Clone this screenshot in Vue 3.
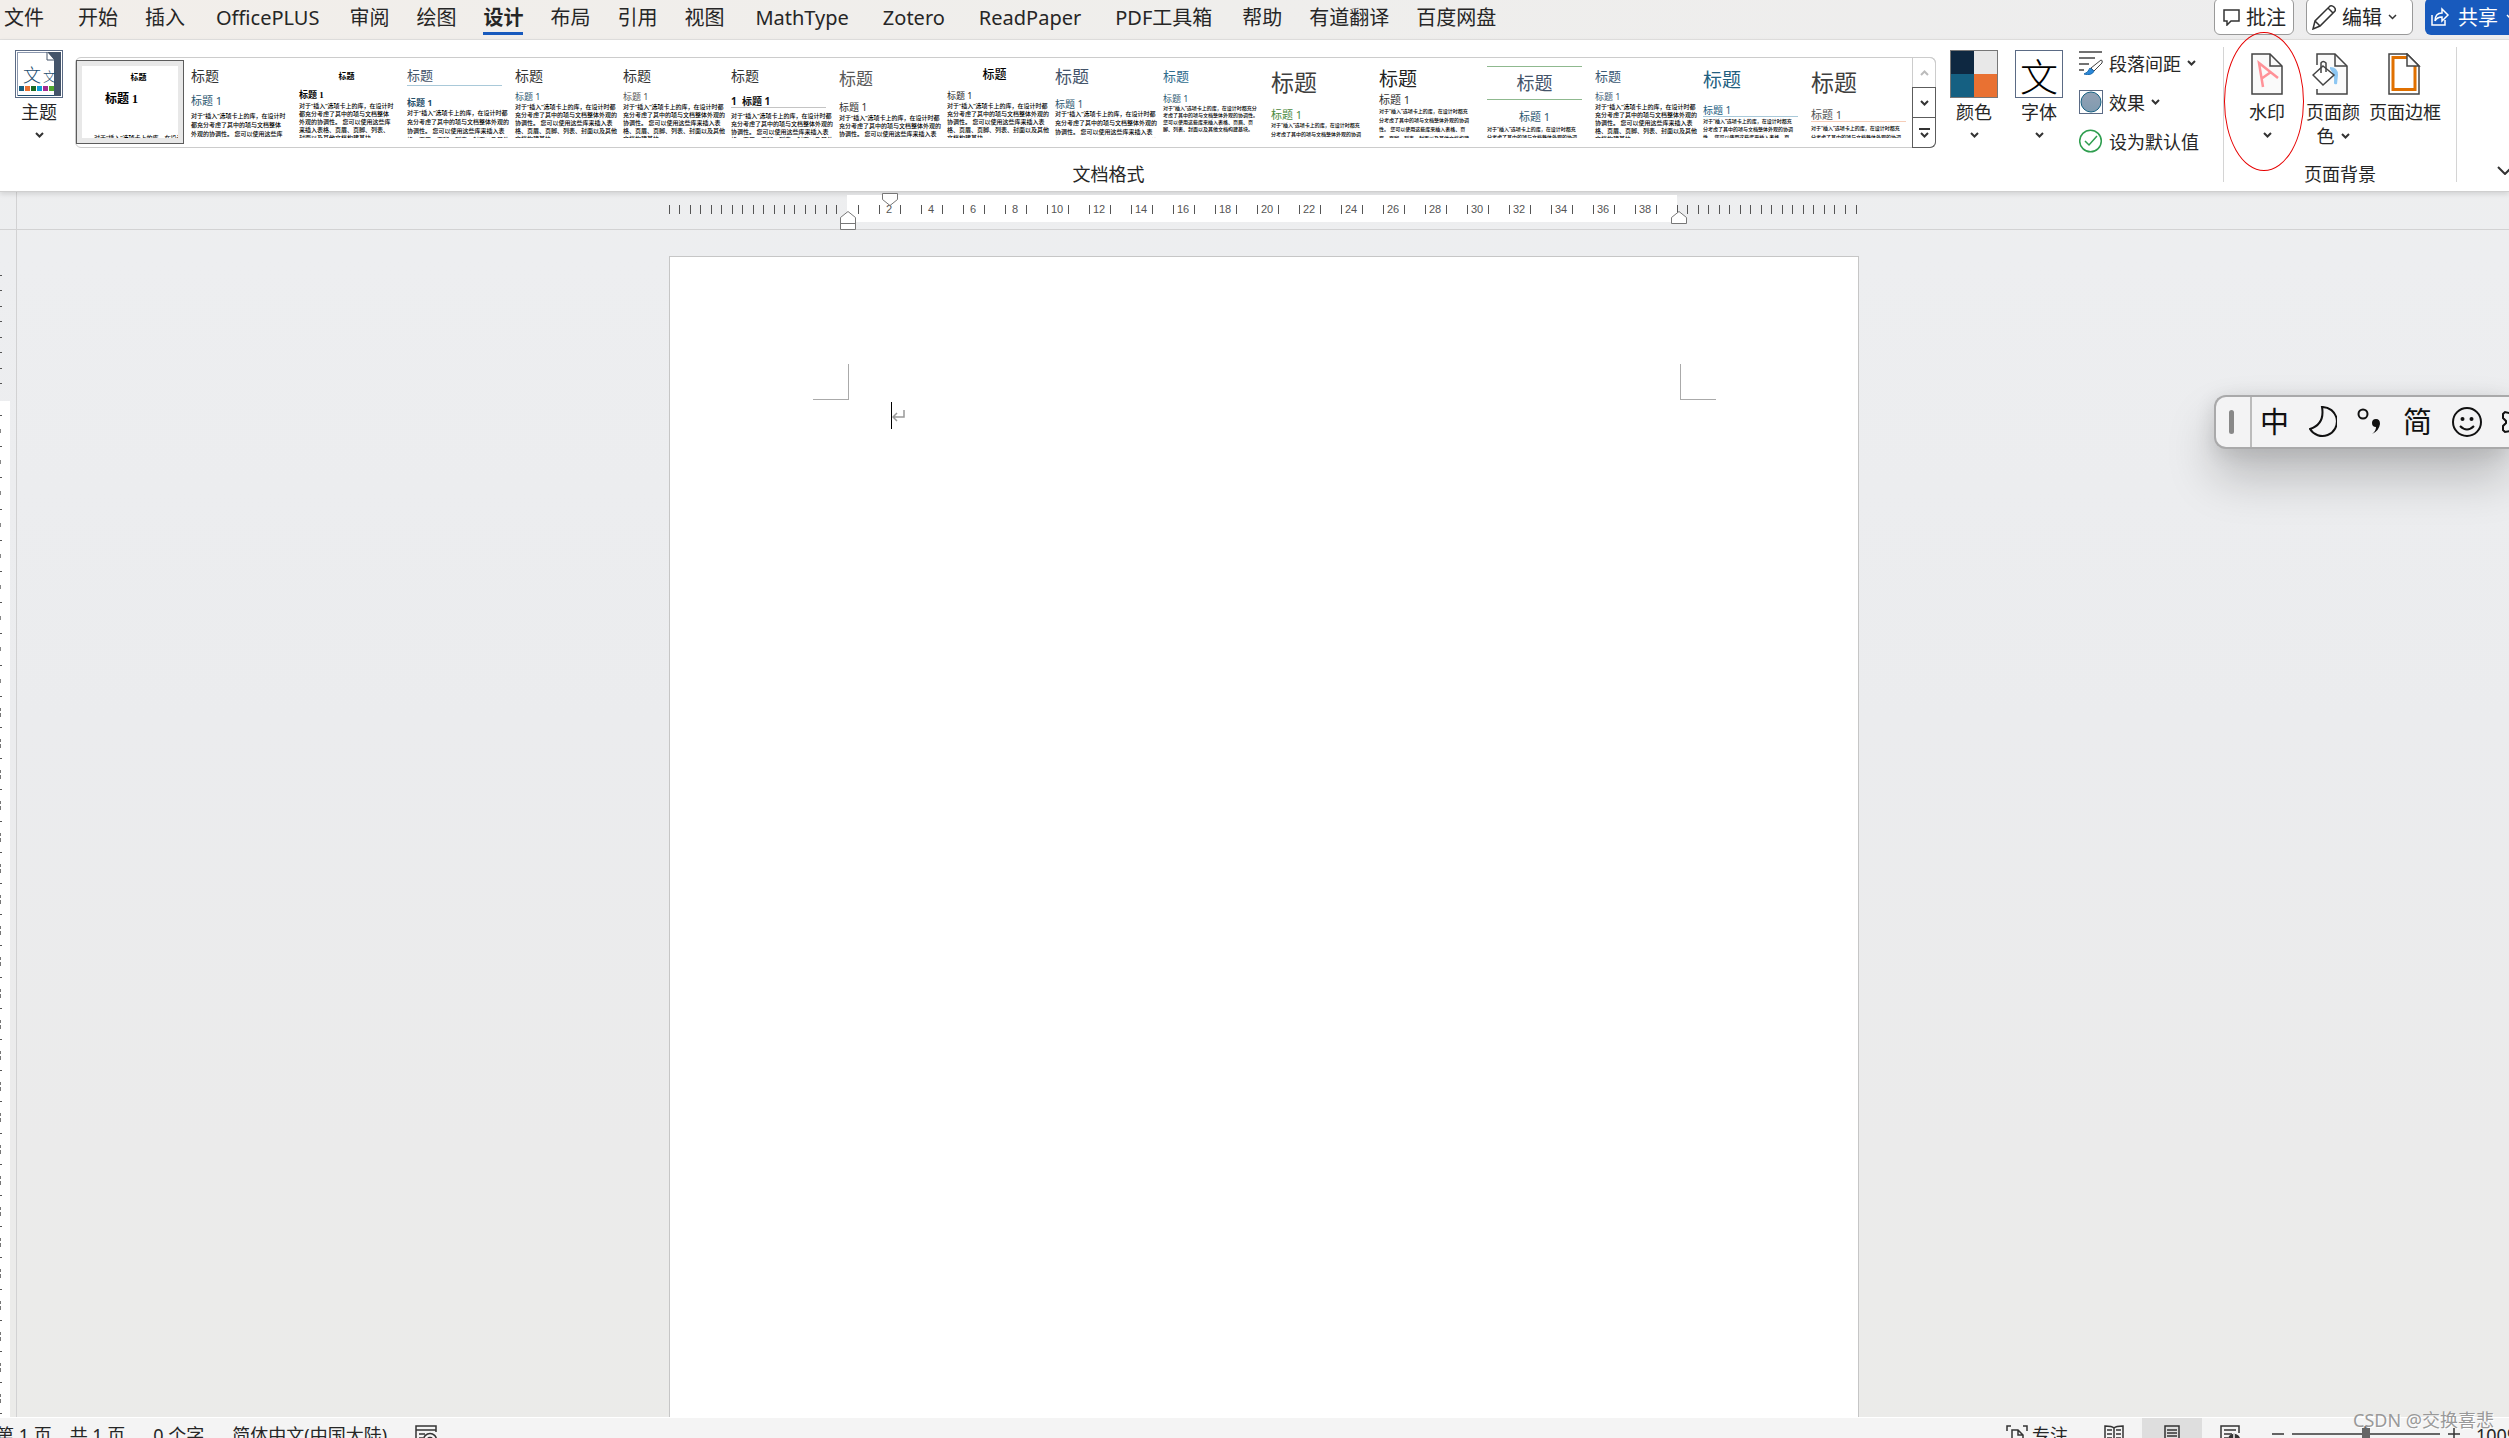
<script setup>
const tabs = ['开始', '插入', 'OfficePLUS', '审阅', '绘图', '设计', '布局', '引用', '视图', 'MathType', 'Zotero', 'ReadPaper', 'PDF工具箱', '帮助', '有道翻译', '百度网盘']

const wide = [
  '对于“插入”选项卡上的库，在设计时',
  '都充分考虑了其中的项与文档整体',
  '外观的协调性。 您可以使用这些库',
  '来插入表格、页眉、页脚、列表、',
  '封面以及其他文档构建基块。'
]
const normal = [
  '对于“插入”选项卡上的库，在设计时都',
  '充分考虑了其中的项与文档整体外观的',
  '协调性。 您可以使用这些库来插入表',
  '格、页眉、页脚、列表、封面以及其他',
  '文档构建基块。'
]
const tight = [
  '对于“插入”选项卡上的库，在设计时都充',
  '分考虑了其中的项与文档整体外观的协调',
  '性。 您可以使用这些库来插入表格、页',
  '眉、页脚、列表、封面以及其他文档构建'
]
const dense = [
  '对于“插入”选项卡上的库，在设计时都充分',
  '考虑了其中的项与文档整体外观的协调性。',
  '您可以使用这些库来插入表格、页眉、页',
  '脚、列表、封面以及其他文档构建基块。'
]

// t: title size, th: title row, gap: space above the heading, h: heading size,
// b: space above the body, n: body lines that fit on the sheet
const samples = [
  { t: 8, th: 24, gap: 3, h: 12, b: 29, lh: 8, n: 1, lines: wide, cls: 'serif center bold indent', tc: '#000', hc: '#000' },
  { t: 14, th: 20, gap: 9, h: 11, b: 5, lh: 9, n: 3, lines: wide, cls: '', tc: '#333', hc: '#2c5871' },
  { t: 8, th: 22, gap: 1, h: 9, b: 1, lh: 8, n: 5, lines: wide, cls: 'serif center bold', tc: '#000', hc: '#000' },
  { t: 13, th: 20, gap: 11, h: 9, b: 0, lh: 9, n: 4, lines: normal, cls: 'rule-title bold-heading', tc: '#44546a', hc: '#1f4e6a', rc: '#a9c9d9' },
  { t: 14, th: 20, gap: 5, h: 9, b: 0, lh: 8, n: 5, lines: normal, cls: '', tc: '#333', hc: '#2c5871' },
  { t: 14, th: 20, gap: 5, h: 9, b: 0, lh: 8, n: 5, lines: normal, cls: '', tc: '#333', hc: '#555' },
  { t: 14, th: 20, gap: 9, h: 10, b: 4, lh: 8, n: 4, lines: normal, cls: 'rule-heading bold-heading', tc: '#333', hc: '#111', rc: '#c4c4c4', pre: '1  ' },
  { t: 17, th: 24, gap: 11, h: 10, b: 1, lh: 8, n: 3, lines: normal, cls: '', tc: '#595959', hc: '#333' },
  { t: 12, th: 18, gap: 6, h: 9, b: 0, lh: 8, n: 5, lines: normal, cls: 'center medium-title', tc: '#000', hc: '#222' },
  { t: 17, th: 20, gap: 12, h: 10, b: 0, lh: 9, n: 4, lines: normal, cls: '', tc: '#44546a', hc: '#2c5871' },
  { t: 13, th: 20, gap: 7, h: 9, b: 0, lh: 7, n: 4, lines: dense, cls: 'small', tc: '#2f6d8e', hc: '#2c5871' },
  { t: 23, th: 32, gap: 11, h: 11, b: 0, lh: 9, n: 2, lines: tight, cls: 'small', tc: '#404040', hc: '#4c8a3f' },
  { t: 19, th: 26, gap: 2, h: 11, b: 1, lh: 9, n: 4, lines: tight, cls: 'small', tc: '#222', hc: '#333' },
  { t: 18, th: 34, gap: 11, h: 11, b: 2, lh: 8, n: 2, lines: tight, cls: 'small center center-heading rule-both', tc: '#44546a', hc: '#2c5871', rc: '#8fb98f' },
  { t: 13, th: 20, gap: 5, h: 9, b: 0, lh: 8, n: 5, lines: normal, cls: '', tc: '#3b5a75', hc: '#3b5a75' },
  { t: 19, th: 28, gap: 10, h: 10, b: 0, lh: 8, n: 3, lines: tight, cls: 'small rule-heading', tc: '#22607f', hc: '#22607f', rc: '#a9c9d9' },
  { t: 23, th: 32, gap: 11, h: 11, b: 2, lh: 9, n: 2, lines: tight, cls: 'small rule-heading', tc: '#404040', hc: '#555', rc: '#f6cdb8' }
]

const isLatin = (t) => /^[A-Za-z]/.test(t)
const numbers = Array.from({ length: 19 }, (_, i) => (i + 1) * 2)
const leftTicks = Array.from({ length: 17 }, (_, i) => Math.round(i * 10.45))
const midTicks = Array.from({ length: 39 }, (_, i) => Math.round(188.5 + i * 21))
const rightTicks = Array.from({ length: 18 }, (_, i) => Math.round(1007.5 + i * 10.53))
const hTicks = [...leftTicks, ...midTicks, ...rightTicks]
const upTicks = Array.from({ length: 8 }, (_, i) => Math.round(45 + i * 15.45))
const downTicks = Array.from({ length: 60 }, (_, i) => Math.round(14 + i * 31.2))
const upper = downTicks.slice(0, 9).map((y) => y + 15)
const lower = downTicks.slice(9).map((y) => y + 12)
</script>

<template>
  <div class="word">
    <header class="top">
      <nav class="tabs" aria-label="功能区">
        <button class="tab file">文件</button>
        <button v-for="t in tabs" :key="t" class="tab" :class="{ active: t === '设计', latin: isLatin(t) }">{{ t }}</button>
      </nav>
      <div class="actions">
        <button class="action comments">
          <svg width="18" height="18" viewBox="0 0 18 18"><path d="M1 2h15v11H8l-4 4v-4H1z" /></svg>批注
        </button>
        <button class="action edit">
          <svg width="24" height="26" viewBox="0 0 24 26"><path d="M1 25l2-8L18 2q2-1 4 1t1 4L8 22zM3 17l5 5M16 4l5 5" /></svg>编辑
          <svg class="chev" width="9" height="6" viewBox="0 0 9 6"><path d="M1 1l3.500 3.500L8 1" /></svg>
        </button>
        <button class="action share">
          <svg width="19" height="20" viewBox="0 0 19 20"><path d="M1 8v10h13v-5M4 14q0-8 7-8V2l6 6-6 6v-4q-5 0-7 4" /></svg>共享
          <svg class="chev" width="9" height="6" viewBox="0 0 9 6"><path d="M1 1l3.500 3.500L8 1" /></svg>
        </button>
      </div>
    </header>

    <section class="ribbon">
      <div class="group formats">
        <div class="row">
          <button class="big theme">
            <svg width="48" height="48" viewBox="0 0 48 48">
              <rect x=".5" y=".5" width="47" height="47" fill="#fff" stroke="#5b6b85" />
              <rect x="2.500" y="2.500" width="43" height="43" fill="#fff" stroke="#8b97ad" />
              <path d="M32 2h14v44h-7V10z" fill="#44546a" />
              <path d="M32 2v8h7" fill="#fff" stroke="#44546a" />
              <path d="M3 45.500h36" stroke="#1d4d70" />
              <text class="thin" x="8" y="32" font-size="18" fill="#1d4d70">文</text>
              <text class="thin" x="28" y="31" font-size="13" fill="#1d4d70">文</text>
              <path d="M4 36h5v5H4z" fill="#156082" /><path d="M10 36h5v5h-5z" fill="#e97132" /><path d="M16 36h5v5h-5z" fill="#196b24" />
              <path d="M22 36h5v5h-5z" fill="#0f9ed5" /><path d="M28 36h5v5h-5z" fill="#a02b93" /><path d="M34 36h5v5h-5z" fill="#4ea72e" />
            </svg>
            <span>主题</span>
            <svg class="chev" width="9" height="6" viewBox="0 0 9 6"><path d="M1 1l3.500 3.500L8 1" /></svg>
          </button>
          <div class="gallery">
            <button v-for="(s, i) in samples" :key="i" class="sample" :class="[s.cls, { picked: i === 0 }]">
              <span class="sheet" :style="{ '--rule': s.rc }">
                <span class="s-title" :style="{ fontSize: s.t + 'px', height: s.th + 'px', color: s.tc }">标题</span>
                <span class="s-head" :style="{ fontSize: s.h + 'px', marginTop: s.gap + 'px', color: s.hc }">{{ s.pre }}标题 1</span>
                <span class="s-body" :style="{ marginTop: s.b + 'px', lineHeight: s.lh + 'px' }">
                  <span v-for="l in s.lines.slice(0, s.n)" :key="l">{{ l }}</span>
                </span>
              </span>
            </button>
            <div class="scroller">
              <button class="dim" aria-label="上一行"><svg class="chev" width="9" height="6" viewBox="0 0 9 6"><path d="M1 5l3.500-3.500L8 5" /></svg></button>
              <button aria-label="下一行"><svg class="chev" width="9" height="6" viewBox="0 0 9 6"><path d="M1 1l3.500 3.500L8 1" /></svg></button>
              <button aria-label="其他"><svg class="chev" width="11" height="10" viewBox="0 0 11 10"><path d="M0 1h11M2 5l3.500 3.500L9 5" /></svg></button>
            </div>
          </div>
          <button class="big colors">
            <svg width="48" height="48" viewBox="0 0 48 48">
              <path d="M0 0h24v24H0z" fill="#0e2841" /><path d="M24 0h24v24H24z" fill="#e8e8e8" />
              <path d="M0 24h24v24H0z" fill="#156082" /><path d="M24 24h24v24H24z" fill="#e97132" />
              <rect x=".5" y=".5" width="47" height="47" fill="none" stroke="#777" />
            </svg>
            <span>颜色</span>
            <svg class="chev" width="9" height="6" viewBox="0 0 9 6"><path d="M1 1l3.500 3.500L8 1" /></svg>
          </button>
          <button class="big fonts">
            <svg width="48" height="48" viewBox="0 0 48 48">
              <rect x=".5" y=".5" width="47" height="47" fill="#fff" stroke="#5b6b85" />
              <text class="thin" x="5" y="41" font-size="38" fill="#000">文</text>
            </svg>
            <span>字体</span>
            <svg class="chev" width="9" height="6" viewBox="0 0 9 6"><path d="M1 1l3.500 3.500L8 1" /></svg>
          </button>
          <div class="stack">
            <button class="line">
              <svg width="24" height="24" viewBox="0 0 24 24">
                <path d="M0 1h23M0 7h16M0 13h10M0 19h5" stroke="#444" stroke-width="1.500" fill="none" />
                <path d="M22 9q2 0 1 3l-8 8-3-3z" fill="#fff" stroke="#444" />
                <path d="M11 17l4 3q-2 5-10 3 4-1 6-6z" fill="#2b88d8" stroke="#1a6bb0" />
              </svg>段落间距
              <svg class="chev" width="9" height="6" viewBox="0 0 9 6"><path d="M1 1l3.500 3.500L8 1" /></svg>
            </button>
            <button class="line">
              <svg width="24" height="24" viewBox="0 0 24 24">
                <defs><linearGradient id="ball" x1="0" y1="0" x2="0" y2="1"><stop offset="0" stop-color="#93a1b4" /><stop offset="1" stop-color="#7f9bb0" /></linearGradient></defs>
                <rect x=".5" y=".5" width="23" height="23" fill="#fff" stroke="#5b6b85" />
                <circle cx="12" cy="12" r="10" fill="url(#ball)" stroke="#156082" />
              </svg>效果
              <svg class="chev" width="9" height="6" viewBox="0 0 9 6"><path d="M1 1l3.500 3.500L8 1" /></svg>
            </button>
            <button class="line">
              <svg width="24" height="24" viewBox="0 0 24 24"><circle cx="11.500" cy="12" r="10.800" fill="#fff" stroke="#2f9e4f" stroke-width="1.500" /><path d="M6 12l4 4 8-9" fill="none" stroke="#2f9e4f" stroke-width="1.500" /></svg>设为默认值
            </button>
          </div>
        </div>
        <div class="caption">文档格式</div>
      </div>

      <div class="group background">
        <div class="row">
          <button class="big mark">
            <svg width="32" height="42" viewBox="0 0 32 42">
              <path d="M1 1h18l12 12v28H1z" fill="#fafafa" stroke="#444" stroke-width="1.500" /><path d="M19 1v12h12" fill="none" stroke="#444" stroke-width="1.500" />
              <path d="M12 34L8 10l19 15M10 26l10-7" fill="none" stroke="#ff9298" stroke-width="2.500" />
            </svg>
            <span>水印</span>
            <svg class="chev" width="9" height="6" viewBox="0 0 9 6"><path d="M1 1l3.500 3.500L8 1" /></svg>
            <i class="ring"></i>
          </button>
          <button class="big page-color">
            <svg width="42" height="42" viewBox="0 0 42 42">
              <path d="M5 1h18l12 12v28H5z" fill="#fafafa" stroke="#444" stroke-width="1.500" /><path d="M23 1v12h12" fill="none" stroke="#444" stroke-width="1.500" />
              <path d="M2 12h7v24H2z" fill="#fff" />
              <path d="M18 14q8 0 8 8l-1 9q-3 1-3-1 1-8-4-14z" fill="#8cc6f2" />
              <path d="M11 13L22 22 11 32 1 22z" fill="#fff" stroke="#444" stroke-width="1.500" />
              <path d="M9 20V10q2-3 5 0v9" fill="none" stroke="#444" stroke-width="1.500" />
            </svg>
            <span>页面颜</span>
            <span class="second">色<svg class="chev" width="9" height="6" viewBox="0 0 9 6"><path d="M1 1l3.500 3.500L8 1" /></svg></span>
          </button>
          <button class="big border">
            <svg width="34" height="42" viewBox="0 0 34 42">
              <path d="M1 1h18l12 12v28H1z" fill="#fff" stroke="#444" stroke-width="1.500" />
              <path d="M20 4.500H5v32h22V13" fill="none" stroke="#e07000" stroke-width="3" />
              <path d="M19 1v12h12z" fill="#fafafa" stroke="#444" stroke-width="1.500" />
            </svg>
            <span>页面边框</span>
          </button>
        </div>
        <div class="caption">页面背景</div>
      </div>
      <button class="collapse" aria-label="折叠功能区"><svg width="16" height="9" viewBox="0 0 16 9"><path d="M1 1l7 7 7-7" /></svg></button>
    </section>

    <main class="work">
      <div class="corner"></div>
      <div class="hruler">
        <div class="scale">
          <div class="text-zone"><span v-for="n in numbers" :key="n">{{ n }}</span></div>
          <svg class="ticks" width="1190" height="38" viewBox="0 0 1190 38">
            <path v-for="x in hTicks" :key="x" :d="`M${x + 0.5} 14v9`" stroke="#555" />
            <path d="M213.500 2.500h15v6l-7.500 6-7.500-6z" fill="#fff" stroke="#777" />
            <path d="M171.500 38.500v-12l7.500-6 7.500 6v12zM171.500 32.500h15" fill="#fff" stroke="#777" />
            <path d="M1002.500 32.500v-6l7.500-6 7.500 6v6z" fill="#fff" stroke="#777" />
          </svg>
        </div>
      </div>
      <div class="vruler">
        <svg class="up" width="10" height="171" viewBox="0 0 10 171"><path v-for="y in upTicks" :key="y" :d="`M0 ${y + 0.5}h2`" stroke="#555" /></svg>
        <div class="down">
          <svg width="10" height="1900" viewBox="0 0 10 1900">
            <path v-for="y in downTicks" :key="y" :d="`M0 ${y + 0.5}h2`" stroke="#555" />
            <path v-for="y in upper" :key="y" :d="`M.5 ${y - 1}v4`" stroke="#888" />
            <path v-for="y in lower" :key="y" :d="`M.5 ${y}v3m0 2v4`" stroke="#777" />
          </svg>
        </div>
      </div>
      <div class="canvas">
        <article class="paper">
          <i class="crop left"></i>
          <div class="editor">
            <i class="caret"></i>
            <svg width="13" height="12" viewBox="0 0 13 12"><path d="M12 0v7H1M5 3L1 7l4 4" fill="none" stroke="#999" stroke-width="1.500" /></svg>
          </div>
          <i class="crop right"></i>
        </article>
      </div>
    </main>

    <aside class="ime">
      <span class="grip"><i></i></span>
      <button>中</button>
      <button aria-label="半角"><svg width="28" height="32" viewBox="0 0 28 32"><path d="M13 1a14.500 14.500 0 1 1-12 22Q16 18 13 1z" /></svg></button>
      <button aria-label="标点"><svg width="26" height="28" viewBox="0 0 26 28"><circle cx="6" cy="6" r="4.500" /><path d="M15 15q0-4 4-4t4 5q-1 7-8 10 4-3 4-7-4 0-4-4z" fill="#111" stroke="none" /></svg></button>
      <button>简</button>
      <button aria-label="表情"><svg width="30" height="30" viewBox="0 0 30 30"><circle cx="15" cy="15" r="14" /><circle cx="10.500" cy="12" r="2" fill="#111" stroke="none" /><circle cx="19.500" cy="12" r="2" fill="#111" stroke="none" /><path d="M8 19q7 7 14 0" /></svg></button>
      <button aria-label="设置"><svg width="28" height="28" viewBox="0 0 28 28"><path d="M10 4l-3 1-4-1-2 2v4l3 3v2l-3 3v4l2 2 5-1 3 3h6l3-3 5 1 2-2v-4l-3-3v-2l3-3V6l-2-2-4 1-3-1z" /><circle cx="14" cy="14" r="4" /></svg></button>
    </aside>

    <footer class="status">
      <span class="pages">第 1 页</span>
      <span class="total">共 1 页</span>
      <span class="words">0 个字</span>
      <span class="lang">简体中文(中国大陆)</span>
      <svg width="22" height="22" viewBox="0 0 22 22"><path d="M1 22V1h20v6M1 5h20M4 9h6M4 13h4" /><circle cx="15" cy="15" r="6.500" /><circle cx="15" cy="15" r="2.500" fill="#333" /></svg>
      <button class="focus"><svg width="22" height="22" viewBox="0 0 22 22"><path d="M1 6V1h4M17 1h4v5M6 22V5h6l5 5v12M12 5v5h5" /></svg>专注</button>
      <button class="view" aria-label="阅读视图"><svg width="20" height="20" viewBox="0 0 20 20"><path d="M10 3v17M10 3Q8 1 1 1v17h9M10 3q2-2 9-2v17h-9M3 5h5M3 9h5M3 13h5M12 5h5M12 9h5M12 13h5" /></svg></button>
      <button class="view on" aria-label="页面视图"><svg width="16" height="20" viewBox="0 0 16 20"><path d="M1 20V1h14v19M3 5h10M3 8h10M3 11h10M3 14h10M3 17h10" /></svg></button>
      <button class="view" aria-label="Web 版式视图"><svg width="21" height="20" viewBox="0 0 21 20"><path d="M1 20V1h18v7M4 5h12M4 9h8M4 13h4" /><circle cx="14" cy="15" r="5.500" fill="#333" /><path d="M9 15h11M14 9v11" stroke="#f4f4f4" /></svg></button>
      <button class="zoom" aria-label="缩小"><svg width="12" height="12" viewBox="0 0 12 12"><path d="M0 6h12" /></svg></button>
      <input class="slider" type="range" min="0" max="100" value="50" aria-label="缩放" />
      <button class="zoom" aria-label="放大"><svg width="12" height="12" viewBox="0 0 12 12"><path d="M0 6h12M6 0v12" /></svg></button>
      <span class="percent">100%</span>
    </footer>
    <div class="credit">CSDN @交换喜悲</div>
  </div>
</template>

<style>
body {
  margin: 0;
  overflow: hidden;
}
</style>

<style scoped>
* {
  box-sizing: border-box;
}
.word {
  position: relative;
  display: flex;
  flex-direction: column;
  height: 100vh;
  overflow: hidden;
  font-family: "Noto Sans", "Noto Sans CJK SC", sans-serif;
  font-size: 18px;
  color: #262626;
  background: linear-gradient(180deg, #eeeeed 0%, #edeef0 18%, #ebecee 50%, #ebebeb 80%, #ebebe9 100%);
}
button {
  margin: 0;
  padding: 0;
  border: 0;
  background: none;
  color: inherit;
  font: inherit;
  white-space: nowrap;
}
svg {
  display: block;
  flex: none;
}
.chev {
  fill: none;
  stroke: #333;
  stroke-width: 2;
}
.thin {
  font-family: "Noto Sans CJK SC", sans-serif;
  font-weight: 300;
}

/* tab strip */
.top {
  display: flex;
  flex: none;
  justify-content: space-between;
  height: 40px;
  border-bottom: 1px solid #e2e1e0;
  background: linear-gradient(90deg, #f2eeea, #efeeec 50%, #ededee);
  font-size: 20px;
}
.tabs {
  display: flex;
  gap: 27px;
  padding-left: 4px;
}
.tab {
  height: 35px;
  line-height: 35px;
}
.tab.latin {
  padding: 0 3px 0 4px;
}
.file {
  margin-right: 7px;
}
.tab.active {
  font-weight: 700;
  border-bottom: 3px solid #185abd;
}
.actions {
  display: flex;
  gap: 12px;
  margin-top: -2px;
}
.action {
  display: flex;
  align-items: center;
  gap: 8px;
  height: 37px;
  padding: 0 8px;
  border: 1px solid #999;
  border-radius: 6px;
  background: #fff;
}
.action svg {
  fill: none;
  stroke: #333;
  stroke-width: 1.5;
}
.action.comments {
  width: 80px;
  gap: 5px;
}
.action.edit {
  width: 107px;
  padding: 0 5px;
  gap: 6px;
}
.action.share {
  width: 84px;
  padding: 0 6px;
  overflow: hidden;
  border: 0;
  border-radius: 6px 0 0 6px;
  background: #185abd;
  color: #fff;
}
.action.share svg {
  stroke: #fff;
}

/* ribbon */
.ribbon {
  display: flex;
  flex: none;
  height: 152px;
  background: #fff;
  border-bottom: 1px solid #cfcfcf;
  box-shadow: 0 2px 5px rgba(0, 0, 0, 0.12);
  position: relative;
}
.group {
  display: flex;
  flex-direction: column;
  margin: 7px 0 9px;
  border-right: 1px solid #d4d4d4;
}
.row {
  display: flex;
  height: 115px;
}
.caption {
  line-height: 24px;
  height: 20px;
  text-align: center;
}
.formats {
  flex: none;
  width: 2224px;
}
.formats .caption {
  padding-right: 6px;
}
.background {
  width: 233px;
}
.big {
  display: flex;
  flex-direction: column;
  align-items: center;
  flex: none;
  padding-top: 3px;
  line-height: 24px;
}
.big > svg:first-child {
  margin-bottom: 2px;
}
.big .chev {
  margin-top: 8px;
}
.theme {
  width: 48px;
  margin: 0 12px 0 15px;
}
.colors {
  width: 48px;
  margin-left: 14px;
}
.fonts {
  width: 48px;
  margin-left: 17px;
}
.stack {
  display: flex;
  flex-direction: column;
  gap: 15px;
  margin: 4px 0 0 16px;
}
.line {
  display: flex;
  align-items: center;
  gap: 6px;
  height: 24px;
}
.background .big {
  padding-top: 6px;
}
.background .big > svg:first-child {
  margin-bottom: 5px;
}
.mark {
  position: relative;
  width: 82px;
  padding-left: 4px;
}
.ring {
  position: absolute;
  left: 0;
  top: -15px;
  width: 80px;
  height: 139px;
  border: 1px solid #e60000;
  border-radius: 50%;
}
.page-color {
  width: 54px;
}
.second {
  display: flex;
  align-items: center;
  gap: 6px;
}
.second .chev {
  margin: 0;
}
.border {
  width: 72px;
  margin-left: 9px;
}
.collapse {
  align-self: flex-end;
  width: 12px;
  height: 9px;
  margin: 0 0 16px auto;
  overflow: hidden;
}
.collapse svg {
  fill: none;
  stroke: #333;
  stroke-width: 2;
}

/* format gallery */
.gallery {
  display: flex;
  flex: none;
  width: 1861px;
  height: 91px;
  margin-top: 10px;
  border: 1px solid #ccc;
  border-radius: 6px;
}
.sample {
  flex: none;
  width: 108px;
  height: 84px;
  margin-top: 2px;
  padding: 5px;
  border: 1px solid transparent;
}
.picked {
  border-color: #5c5c5c;
  background: #e8e8e8;
}
.picked .sheet {
  background: #fff;
}
.sheet {
  display: block;
  height: 72px;
  width: 96px;
  padding-left: 1px;
  overflow-x: visible;
  overflow-y: clip;
  text-align: left;
}
.s-title {
  display: flex;
  align-items: center;
  line-height: 1;
}
.s-head {
  display: block;
  line-height: 12px;
  white-space: pre;
}
.s-body {
  display: block;
  font-size: 6px;
  color: #000;
}
.small .s-body {
  font-size: 5px;
}
.s-body span {
  display: block;
  font-weight: 500;
}
.serif {
  font-family: "Liberation Serif", "Noto Sans CJK SC", serif;
}
.serif .s-body {
  font-family: "Noto Sans", "Noto Sans CJK SC", sans-serif;
}
.center .s-title {
  justify-content: center;
}
.center-heading .s-head {
  text-align: center;
}
.bold .s-title,
.bold .s-head,
.bold-heading .s-head {
  font-weight: 700;
}
.medium-title .s-title {
  font-weight: 500;
}
.indent .s-title {
  padding-left: 16px;
}
.indent .s-head {
  padding-left: 22px;
}
.indent .s-body {
  padding-left: 11px;
  overflow: hidden;
}
.rule-title .s-title,
.rule-both .s-title,
.rule-heading .s-head {
  border-bottom: 1px solid var(--rule);
}
.rule-both .s-title {
  border-top: 1px solid var(--rule);
}
.scroller {
  display: flex;
  flex-direction: column;
  width: 24px;
  margin: -1px -1px -1px auto;
}
.scroller button {
  display: flex;
  flex: 1;
  align-items: center;
  justify-content: center;
  border: 1px solid #5c5c5c;
}
.scroller button:last-child {
  border-top: 0;
  border-radius: 0 0 6px 0;
}
.scroller .dim {
  border-color: #ccc;
  border-bottom: 0;
  border-radius: 0 6px 0 0;
}
.dim .chev {
  stroke: #bbb;
}

/* rulers and page */
.work {
  display: grid;
  grid-template-columns: 17px 1fr;
  grid-template-rows: 38px 1fr;
  flex: 1;
  min-height: 0;
}
.corner,
.vruler {
  border-right: 1px solid #d2d2d3;
}
.corner,
.hruler {
  border-bottom: 1px solid #d2d2d3;
}
.hruler,
.canvas {
  display: flex;
  justify-content: center;
  padding-left: 2px;
}
.canvas {
  overflow: hidden;
  padding-top: 26px;
}
.scale {
  position: relative;
  width: 1190px;
  padding: 3px 182px 0 178px;
}
.text-zone {
  display: flex;
  height: 27px;
  padding-left: 21px;
  background: #fff;
  font: 11px/29px "Liberation Sans", Arial, sans-serif;
  color: #555;
}
.text-zone span {
  width: 42px;
  text-align: center;
}
.ticks {
  position: absolute;
  left: 0;
  top: -1px;
  overflow: visible;
}
.vruler {
  display: flex;
  flex-direction: column;
  overflow: hidden;
}
.down {
  flex: 1;
  width: 10px;
  min-height: 0;
  overflow: hidden;
  background: #fff;
}
.paper {
  display: flex;
  justify-content: space-between;
  width: 1190px;
  padding: 107px 142px 0 143px;
  border: 1px solid #c6c6c6;
  border-bottom: 0;
  background: #fff;
}
.crop {
  width: 36px;
  height: 36px;
  border-bottom: 1px solid #aaa;
}
.crop.left {
  border-right: 1px solid #aaa;
}
.crop.right {
  border-left: 1px solid #aaa;
}
.editor {
  display: flex;
  flex: 1;
  align-items: center;
  height: 27px;
  margin: 38px 0 0 42px;
}
.caret {
  width: 1px;
  height: 27px;
  background: #000;
}

/* input-method bar */
.ime {
  position: absolute;
  right: 0;
  top: 395px;
  display: flex;
  align-items: center;
  gap: 20px;
  width: 295px;
  height: 54px;
  overflow: hidden;
  border: 2px solid #a9a9aa;
  border-right: 0;
  border-radius: 12px 0 0 12px;
  background: #f3f3f4;
  box-shadow: 0 28px 48px rgba(0, 0, 0, 0.22), 0 4px 20px rgba(0, 0, 0, 0.12);
  color: #111;
  font-size: 29px;
  line-height: 50px;
}
.ime svg {
  fill: none;
  stroke: #111;
  stroke-width: 2;
}
.grip {
  display: flex;
  flex: none;
  align-items: center;
  justify-content: center;
  width: 36px;
  height: 50px;
  padding-right: 4px;
  margin-right: -12px;
  border-right: 2px solid #bbb;
}
.grip i {
  width: 5px;
  height: 24px;
  border-radius: 3px;
  background: #888;
}

/* status bar */
.status {
  display: flex;
  flex: none;
  height: 21px;
  padding-top: 7px;
  overflow: hidden;
  border-top: 1px solid #fff;
  background: #f4f4f4;
  line-height: 20px;
}
.status span,
.status button {
  flex: none;
  white-space: nowrap;
}
.status svg {
  fill: none;
  stroke: #333;
  stroke-width: 1.5;
}
.pages {
  margin-left: -4px;
}
.total {
  margin-left: 18px;
}
.words,
.lang,
.lang + svg {
  margin-left: 28px;
}
.focus {
  display: flex;
  gap: 4px;
  height: 20px;
  margin: 0 17px 0 auto;
}
.view {
  display: flex;
  justify-content: center;
  width: 57px;
  height: 30px;
  margin-top: -7px;
  padding-top: 7px;
}
.view.on {
  width: 60px;
  background: #dedede;
}
.zoom {
  height: 12px;
  margin: 3px 8px 0;
}
.view + .zoom {
  margin-left: 13px;
}
.slider {
  flex: none;
  width: 148px;
  height: 18px;
  margin: 0;
  appearance: none;
  background: linear-gradient(#666, #666) center / 100% 2px no-repeat;
}
.slider::-webkit-slider-thumb {
  appearance: none;
  width: 8px;
  height: 16px;
  background: #666;
}
.percent {
  width: 33px;
  margin-left: 8px;
}
.credit {
  position: absolute;
  right: 15px;
  bottom: 8px;
  font-size: 18px;
  line-height: 20px;
  color: #999;
  text-shadow: 1px 1px 0 #fff;
}
</style>
